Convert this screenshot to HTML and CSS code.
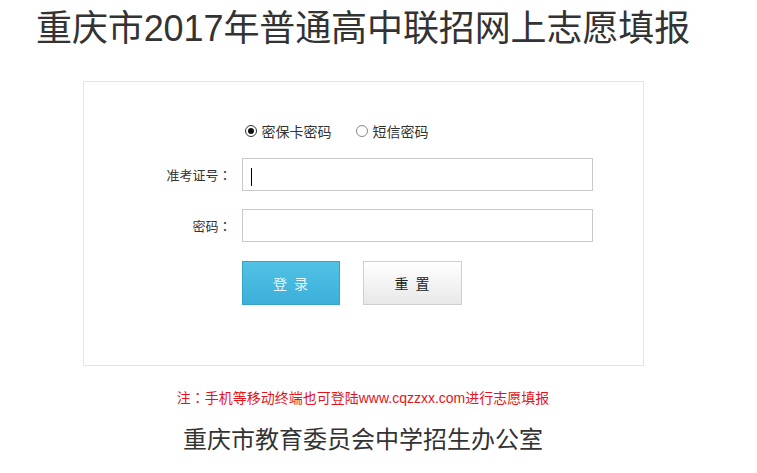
FILE: index.html
```html
<!DOCTYPE html>
<html lang="zh-CN">
<head>
<meta charset="utf-8">
<title>重庆市2017年普通高中联招网上志愿填报</title>
<link rel="stylesheet" href="styles.css">
</head>
<body>
<div class="page">
  <h1 class="title">重庆市2017年普通高中联招网上志愿填报</h1>
  <div class="panel">
    <div class="radios">
      <span class="radio"><span class="dot checked"></span><span class="rtext">密保卡密码</span></span>
      <span class="radio"><span class="dot"></span><span class="rtext">短信密码</span></span>
    </div>
    <div class="row">
      <label class="lbl">准考证号<span class="colon" lang="zh-TW">：</span></label>
      <div class="field"><input class="inp" type="text"><span class="caret"></span></div>
    </div>
    <div class="row">
      <label class="lbl">密码<span class="colon" lang="zh-TW">：</span></label>
      <div class="field"><input class="inp" type="password"></div>
    </div>
    <div class="actions">
      <button class="btn btn-login">登录</button>
      <button class="btn btn-reset">重置</button>
    </div>
  </div>
  <p class="note">注<span class="colon" lang="zh-TW">：</span>手机等移动终端也可登陆www.cqzzxx.com进行志愿填报</p>
  <p class="footer">重庆市教育委员会中学招生办公室</p>
</div>
</body>
</html>
```

FILE: styles.css
```css
html, body {
  margin: 0;
  padding: 0;
  background: #fff;
}
body {
  font-family: "Liberation Sans", "Noto Sans CJK SC", sans-serif;
  color: #333;
}
.page {
  width: 654px;
  margin-left: 36px;
}
.title {
  margin: 0;
  font-size: 36px;
  font-weight: normal;
  line-height: 57px;
  color: #333;
  white-space: nowrap;
  letter-spacing: -0.1px;
}
.panel {
  width: 559px;
  height: 244px;
  margin: 24px auto 0;
  border: 1px solid #e4e4e4;
  padding-top: 39px;
}
.radios {
  display: flex;
  align-items: center;
  height: 20px;
  margin-left: 161px;
  gap: 24px;
  font-size: 14px;
  color: #333;
}
.radio {
  display: flex;
  align-items: center;
  gap: 5px;
}
.dot {
  width: 10px;
  height: 10px;
  border: 1px solid #888;
  border-radius: 50%;
  position: relative;
  background: #fff;
}
.dot.checked {
  border-color: #333;
}
.dot.checked::after {
  content: "";
  position: absolute;
  left: 2px;
  top: 2px;
  width: 6px;
  height: 6px;
  border-radius: 50%;
  background: #111;
}
.row {
  display: grid;
  grid-template-columns: 148px 351px;
  column-gap: 10px;
  align-items: center;
  margin-top: 17px;
}
.row + .row {
  margin-top: 18px;
}
.lbl {
  text-align: right;
  font-size: 13px;
  color: #333;
}
.colon {
  font-family: "Noto Sans CJK TC", "Noto Sans CJK SC", sans-serif;
}
.field {
  position: relative;
  height: 33px;
}
.inp {
  box-sizing: border-box;
  width: 351px;
  height: 33px;
  margin: 0;
  border: 1px solid #c9c9c9;
  padding: 0 8px;
  outline: none;
  background: #fff;
}
.caret {
  position: absolute;
  left: 9px;
  top: 10px;
  width: 1px;
  height: 18px;
  background: #000;
}
.actions {
  display: flex;
  gap: 23px;
  margin-top: 19px;
  margin-left: 158px;
}
.btn {
  box-sizing: border-box;
  height: 44px;
  margin: 0;
  padding: 0 0 0 7px;
  font-family: "Noto Sans CJK SC", sans-serif;
  font-size: 14px;
  letter-spacing: 7px;
  cursor: pointer;
}
.btn-login {
  width: 98px;
  border: 1px solid #35a3cc;
  background: linear-gradient(#52c1e4, #3bb0da);
  color: #eaf7fc;
}
.btn-reset {
  width: 99px;
  border: 1px solid #cfcfcf;
  background: linear-gradient(#ffffff, #e8e8e8);
  color: #222;
}
.note {
  margin: 21px 0 0;
  text-align: center;
  font-size: 14px;
  line-height: 20px;
  color: #e3141b;
  white-space: nowrap;
}
.footer {
  margin: 16px 0 0;
  text-align: center;
  font-size: 24px;
  line-height: 32px;
  color: #333;
  white-space: nowrap;
}
```
